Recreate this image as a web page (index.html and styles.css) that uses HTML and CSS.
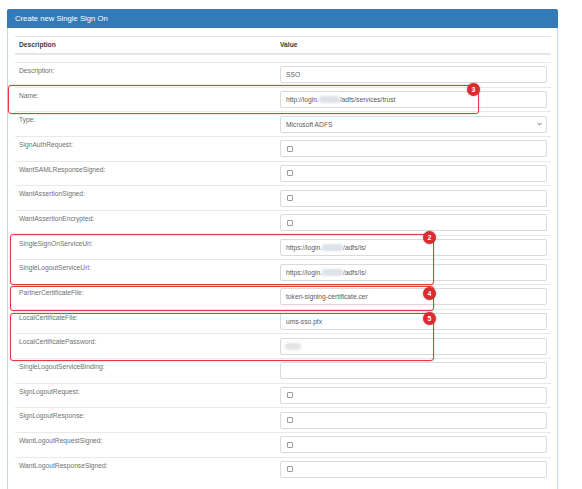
FILE: index.html
```html
<!DOCTYPE html>
<html>
<head>
<meta charset="utf-8">
<link rel="stylesheet" href="styles.css">
</head>
<body>
<div class="panel">
  <div class="panel-heading">Create new Single Sign On</div>
  <div class="panel-body">
    <div class="thead">
      <div class="th">Description</div>
      <div class="th">Value</div>
    </div>
    <div class="spacer"></div>

    <div class="row"><div class="lbl">Description:</div><div class="val"><div class="inp">SSO</div></div></div>
    <div class="row"><div class="lbl">Name:</div><div class="val"><div class="inp">http://login.<span class="blur"></span>/adfs/services/trust</div></div></div>
    <div class="row"><div class="lbl">Type:</div><div class="val"><div class="inp sel"><span>Microsoft ADFS</span><svg class="chev" width="5" height="4" viewBox="0 0 5 4"><path d="M0.6 1 L2.5 2.9 L4.4 1" fill="none" stroke="#666" stroke-width="1"/></svg></div></div></div>
    <div class="row"><div class="lbl">SignAuthRequest:</div><div class="val"><div class="inp"><span class="cb"></span></div></div></div>
    <div class="row"><div class="lbl">WantSAMLResponseSigned:</div><div class="val"><div class="inp"><span class="cb"></span></div></div></div>
    <div class="row"><div class="lbl">WantAssertionSigned:</div><div class="val"><div class="inp"><span class="cb"></span></div></div></div>
    <div class="row"><div class="lbl">WantAssertionEncrypted:</div><div class="val"><div class="inp"><span class="cb"></span></div></div></div>
    <div class="row"><div class="lbl">SingleSignOnServiceUrl:</div><div class="val"><div class="inp">https://login.<span class="blur"></span>/adfs/ls/</div></div></div>
    <div class="row"><div class="lbl">SingleLogoutServiceUrl:</div><div class="val"><div class="inp">https://login.<span class="blur"></span>/adfs/ls/</div></div></div>
    <div class="row"><div class="lbl">PartnerCertificateFile:</div><div class="val"><div class="inp">token-signing-certificate.cer</div></div></div>
    <div class="row"><div class="lbl">LocalCertificateFile:</div><div class="val"><div class="inp">ums-sso.pfx</div></div></div>
    <div class="row"><div class="lbl">LocalCertificatePassword:</div><div class="val"><div class="inp"><span class="blur pw"></span></div></div></div>
    <div class="row"><div class="lbl">SingleLogoutServiceBinding:</div><div class="val"><div class="inp"></div></div></div>
    <div class="row"><div class="lbl">SignLogoutRequest:</div><div class="val"><div class="inp"><span class="cb"></span></div></div></div>
    <div class="row"><div class="lbl">SignLogoutResponse:</div><div class="val"><div class="inp"><span class="cb"></span></div></div></div>
    <div class="row"><div class="lbl">WantLogoutRequestSigned:</div><div class="val"><div class="inp"><span class="cb"></span></div></div></div>
    <div class="row"><div class="lbl">WantLogoutResponseSigned:</div><div class="val"><div class="inp"><span class="cb"></span></div></div></div>
  </div>
</div>

<div class="mark m3"></div><div class="badge b3">3</div>
<div class="mark m2"></div><div class="badge b2">2</div>
<div class="mark m4"></div><div class="badge b4">4</div>
<div class="mark m5"></div><div class="badge b5">5</div>
</body>
</html>
```
FILE: styles.css
```css
html, body {
  margin: 0;
  padding: 0;
  background: #fff;
  font-family: "Liberation Sans", Arial, sans-serif;
  font-size: 6.7px;
  color: #555;
}
.panel {
  margin: 9px 0 0 7px;
  width: 551px;
}
.panel-heading {
  background: #337ab7;
  color: #fff;
  font-size: 7.7px;
  height: 19px;
  line-height: 19px;
  padding: 0 8px;
  border-radius: 2px 2px 0 0;
}
.panel-body {
  border: 1px solid #c3d7ec;
  border-top: 0;
  padding: 8px 6px 20px 7px;
}
.thead {
  display: grid;
  grid-template-columns: 260px 1fr;
  border-top: 1px solid #e6e6e6;
  border-bottom: 2px solid #e6e6e6;
}
.th {
  font-weight: bold;
  color: #3a3a3a;
  line-height: 9.5px;
  padding: 3px 4px 3.5px 4px;
}
.th + .th { padding-left: 5px; }
.spacer { height: 7px; }
.row {
  display: grid;
  grid-template-columns: 260px 1fr;
  border-top: 1px solid #e9e9e9;
}
.lbl {
  padding: 3px 4px 0 4px;
  line-height: 9.5px;
  color: #707070;
}
.val {
  padding: 3.33px 4.5px 3.33px 5px;
}
.inp {
  height: 17px;
  box-sizing: border-box;
  border: 1px solid #dadada;
  border-radius: 2px;
  padding: 0 5px;
  line-height: 15px;
  color: #5a5a5a;
  display: flex;
  align-items: center;
  white-space: nowrap;
}
.sel { justify-content: space-between; padding-right: 4px; }
.chev { display: block; }
.cb {
  width: 4px;
  height: 4px;
  border: 0.8px solid #9a9a9a;
  border-radius: 1px;
  margin-left: 1px;
  display: block;
}
.blur {
  display: inline-block;
  width: 21px;
  height: 7px;
  background: #dde2e8;
  border-radius: 3px;
  filter: blur(1px);
}
.blur.pw { width: 16px; background: #e4e4e4; margin-left: -1px; }

.mark {
  position: absolute;
  border: 1.5px solid #e8393f;
  border-radius: 3px;
  box-shadow: 0 0 2px rgba(0,0,0,0.25), inset 0 0 1px rgba(0,0,0,0.15);
  box-sizing: border-box;
}
.m3 { left: 7.5px; top: 85px; width: 471px; height: 28.5px; }
.m2 { left: 10px; top: 234px; width: 424px; height: 50.5px; }
.m4 { left: 10px; top: 286px; width: 424px; height: 25px; }
.m5 { left: 10px; top: 312.5px; width: 424px; height: 48px; }
.badge {
  position: absolute;
  width: 13px;
  height: 13px;
  margin: -6.5px 0 0 -6.5px;
  border-radius: 50%;
  background: #dc2a2e;
  color: #fff;
  font-size: 7px;
  font-weight: bold;
  line-height: 13px;
  text-align: center;
  box-shadow: 0 0 2px rgba(0,0,0,0.35);
}
.b3 { left: 473.5px; top: 89px; }
.b2 { left: 429.5px; top: 237.5px; }
.b4 { left: 429.5px; top: 293px; }
.b5 { left: 429.5px; top: 318px; }
```
